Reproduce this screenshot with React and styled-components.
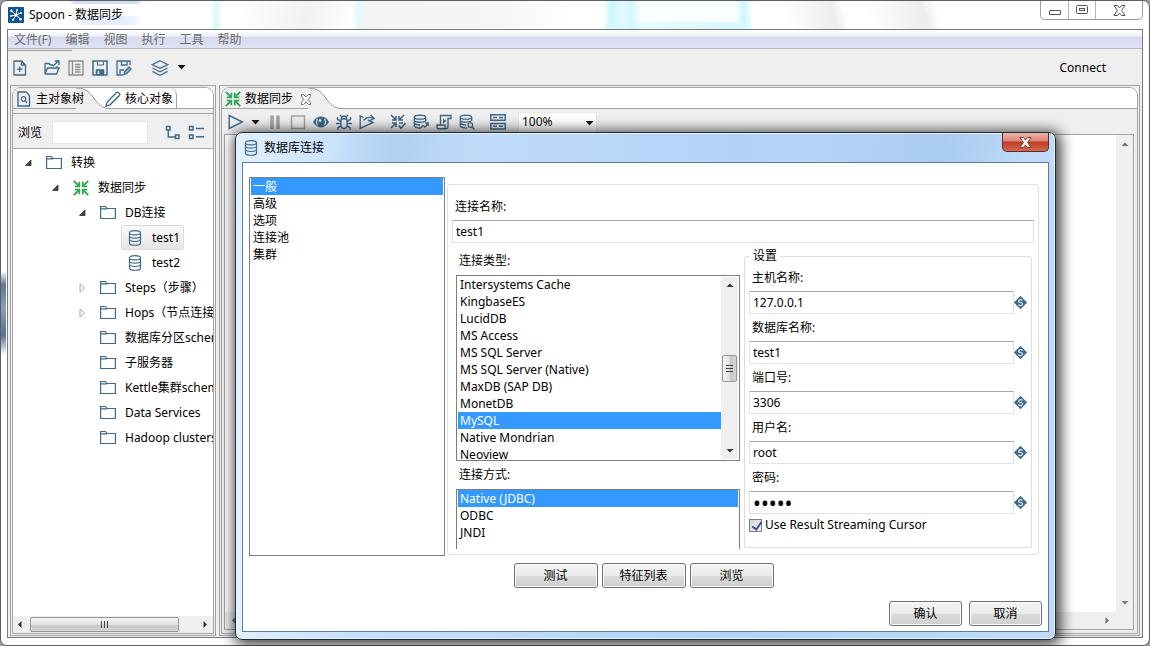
import React, { useState } from 'react'
import styled, { createGlobalStyle } from 'styled-components'

const BLUE = '#3f6a8b'
const GREEN = '#2fa655'

/* ---------- icons ---------- */

const Icon = ({ size = 16, color = BLUE, children }) => (
  <svg width={size} height={size} viewBox="0 0 16 16" fill="none" stroke={color} strokeWidth="1.5" aria-hidden="true">
    {children}
  </svg>
)

const LogoIcon = () => (
  <svg width="16" height="16" viewBox="0 0 16 16" aria-hidden="true">
    <rect width="16" height="16" rx="1" fill="#0f5592" />
    <path d="M8 8L3 3.5M8 8L9 3M8 8L13 6M8 8L3 9M8 8L5 13M8 8L12.5 12" stroke="#fff" strokeWidth="1" />
    <g fill="#fff">
      <circle cx="3.4" cy="3.8" r="1.2" /><circle cx="9" cy="3" r=".9" /><circle cx="13" cy="6" r="1" />
      <circle cx="2.8" cy="9" r=".9" /><circle cx="5" cy="13" r="1" /><circle cx="12.5" cy="12.3" r="1.3" />
      <circle cx="8" cy="8" r="1.6" />
    </g>
  </svg>
)

const NewIcon = () => <Icon><path d="M2 1H9.5L13.5 5V15H2ZM9.5 1V5H13.5M7.7 6.5V12M5 9.2H10.5" strokeWidth="1.3" /></Icon>
const OpenIcon = () => (
  <Icon><path d="M1 14V3.5H5L6.3 5H9M1 14L3.5 8H15L12.5 14H1M9 6L14.5 1M10.8 1H15V5M13 6V8" strokeWidth="1.3" /></Icon>
)
const ExploreIcon = () => (
  <Icon color="#8d8d8d"><path d="M1 1H15V15H1ZM4.5 1V15M7 4.5H12.5M7 7H12.5M7 9.5H12.5M7 12H12.5" strokeWidth="1.3" /></Icon>
)
const SaveIcon = () => (
  <Icon><path d="M1 1H15V15H1Z" /><path d="M4.5 14.5V10H11.5V14.5Z" fill={BLUE} /><path d="M5.5 1.5V5H11.5V1.5" strokeWidth="1" /><path d="M6.5 11V14" stroke="#fff" /></Icon>
)
const SaveAsIcon = () => (
  <Icon>
    <path d="M7 15H1V1H14V5M5.5 1.5V5H11V1.5M4 14V10H8" strokeWidth="1.3" />
    <path d="M8 14.5L8.7 11.5L13 7L15 9L10.8 13.5Z" fill="#9fb6c8" strokeWidth="1.3" />
  </Icon>
)
const LayersIcon = () => (
  <Icon size={18}><path d="M8 1.5L15 5L8 8.3L1 5ZM1.2 8L8 11.3L14.8 8M1.2 11L8 14.4L14.8 11" strokeWidth="1.1" /></Icon>
)
const CaretIcon = () => (
  <svg width="9" height="5" viewBox="0 0 9 5" aria-hidden="true"><path d="M.5 0H8.5L4.5 4.5Z" fill="#111" /></svg>
)
const FileSearchIcon = () => (
  <Icon><path d="M2 1H10L13.5 4.5V15H2Z" strokeWidth="1.4" /><circle cx="7.5" cy="8" r="2.3" strokeWidth="1.2" /><path d="M9 9.7L11 12" strokeWidth="1.2" /></Icon>
)
const PencilIcon = () => (
  <Icon><path d="M1 15L2.2 11L11.5 1.6Q12.5 .8 13.6 1.8L14.3 2.5Q15.2 3.5 14.4 4.5L5 13.8Z" strokeWidth="1.3" /></Icon>
)
const ExpandIcon = () => (
  <Icon><path d="M1.5 1.5H5V5H1.5ZM10.5 10H14V13.5H10.5ZM3.3 5.5V12H10" /></Icon>
)
const CollapseIcon = () => (
  <Icon><path d="M1.5 1.5H5V5H1.5ZM1.5 10H5V13.5H1.5ZM8 3.5H16M8 11.8H16" /></Icon>
)
const FolderIcon = () => <Icon><path d="M.6 13.5V1.5H5.5L7 3.5H15.4V13.5ZM.6 3.8H7" strokeWidth="1.2" /></Icon>
const TransIcon = () => (
  <Icon color={GREEN}>
    <path d="M.8 .8L6 6M15.2 .8L10 6M.8 15.2L6 10M15.2 15.2L10 10" strokeWidth="1.8" />
    <path d="M6.3 1.8V6.3H1.8M9.7 1.8V6.3H14.2M6.3 14.2V9.7H1.8M9.7 14.2V9.7H14.2" strokeWidth="1.8" />
  </Icon>
)
const DbIcon = () => (
  <Icon>
    <path d="M2.5 2.7V13C2.5 16 13.5 16 13.5 13V2.7M2.5 2.7C2.5 -.1 13.5 -.1 13.5 2.7S2.5 5.5 2.5 2.7M2.5 6.2C2.5 8.7 13.5 8.7 13.5 6.2M2.5 9.6C2.5 12.1 13.5 12.1 13.5 9.6" strokeWidth="1.2" />
  </Icon>
)
const PlayIcon = () => <Icon><path d="M1.2 1.5L14.5 8L1.2 14.5Z" /></Icon>
const PauseIcon = () => <Icon color="#a3a3a3"><path d="M5 1.5V15M11 1.5V15" strokeWidth="3.4" /></Icon>
const StopIcon = () => <Icon color="#a3a3a3"><path d="M1.5 2H14.5V14.5H1.5Z" /></Icon>
const EyeIcon = () => (
  <Icon>
    <path d="M0 8C4 .8 12 .8 16 8C12 15.2 4 15.2 0 8Z" fill={BLUE} stroke="none" />
    <path d="M4.3 4.8Q2.6 8 4.3 11.2M11.7 4.8Q13.4 8 11.7 11.2" stroke="#dbe6ee" strokeWidth="1.2" />
    <circle cx="7" cy="6.5" r="1.2" fill="#fff" stroke="none" />
  </Icon>
)
const BugIcon = () => (
  <Icon><path d="M5.3 5Q3.5 14.5 8 14.5T10.7 5ZM5.5 5Q5.5 2 8 2T10.5 5M4 1L5.8 3M12 1L10.2 3M4.5 7L1.5 5.5V3M11.5 7L14.5 5.5V3M4.2 9.5H0M11.8 9.5H16M5 12L2 13.5V16M11 12L14 13.5V16" strokeWidth="1.4" /></Icon>
)
const ReplayIcon = () => (
  <Icon><path d="M4.5 3.5L1.2 1.8V14.5L14 8.5L9 6" strokeWidth="1.4" /><path d="M4.5 6.5Q8 1.8 13.8 4M11.5 .8L15 4.5L11 6.5" strokeWidth="1.3" /></Icon>
)
const VerifyIcon = () => (
  <Icon><path d="M1 1L6 6M14 1L9 6M1 14L6 9M6 2V6H2M9 2V6H13M6 13V9H2M9 9H13M8.8 11.5L11 14.3L15.5 9" strokeWidth="1.6" /></Icon>
)
const DbImpactIcon = () => (
  <Icon><path d="M7 14C4 14 1.3 13 1.3 12V3.2C1.3 .6 12.7 .6 12.7 3.2S1.3 5.8 1.3 3.2M12.7 3V7M1.3 6.3C1.3 8.5 9 9 12.7 7M1.3 9.3Q3 11 7 11M7 14.5L10 11.5L12 13L15 9.5M12 9H15.2V12" strokeWidth="1.3" /></Icon>
)
const SqlIcon = () => (
  <Icon><path d="M4.5 11V1.5H15V4.5H12V13Q12 14.7 10.2 14.7H2.5Q1 14.7 1 13V11H9V13Q9 14.7 10.4 14.7" strokeWidth="1.4" /><path d="M7 4.5L10.5 7L7 9.5Z" fill={BLUE} stroke="none" /></Icon>
)
const DbExploreIcon = () => (
  <Icon><path d="M8 14C4 14 1.3 13 1.3 12V3.2C1.3 .6 12.7 .6 12.7 3.2S1.3 5.8 1.3 3.2M12.7 3V7M1.3 6.3C1.3 8.5 9 8.5 12 7M1.3 9.3Q3 11 7 11" strokeWidth="1.3" /><circle cx="11.3" cy="11" r="2.3" strokeWidth="1.2" /><path d="M13 12.8L15.5 15.5" /></Icon>
)
const ResultsIcon = () => (
  <Icon><path d="M.8 .8H15.2V6.3H.8ZM.8 9.5H15.2V15H.8ZM3 3.6H7M9 3.6H13M3 12.3H7M9 12.3H13" /></Icon>
)
const VariableIcon = () => (
  <svg width="13" height="13" viewBox="0 0 13 13" aria-hidden="true">
    <path d="M6.5 .7L12.2 6.5L6.5 12.3L.8 6.5Z" fill="#416b88" stroke="#416b88" strokeWidth="1.3" strokeLinejoin="round" />
    <path d="M8.6 4.4Q6.5 2.8 5 4.3T6.5 6.5T8 8.8T4.4 8.7" fill="none" stroke="#e3edf4" strokeWidth="1.1" />
  </svg>
)
const CloseTabIcon = () => (
  <svg width="12" height="11" viewBox="0 0 12 11" fill="#fff" stroke="#666" strokeWidth=".9" aria-hidden="true">
    <path d="M1.5 .5H3.5L6 3L8.5 .5H10.5V2.5L8.2 5.5L10.5 8.5V10.5H8.5L6 8L3.5 10.5H1.5V8.5L3.8 5.5L1.5 2.5Z" />
  </svg>
)
const CrossIcon = ({ stroke }) => (
  <svg width="13" height="11" viewBox="0 0 13 11" fill="#fff" stroke={stroke} aria-hidden="true">
    <path d="M1 .5H4.5L6.5 3L8.5 .5H12L8.6 5.5L12 10.5H8.5L6.5 8L4.5 10.5H1L4.4 5.5Z" />
  </svg>
)
const Twisty = ({ open }) => (
  <svg width="12" height="12" viewBox="0 0 12 12" aria-hidden="true">
    {open
      ? <path d="M9 3V8.5H3.5Z" fill="#444" stroke="#222" strokeWidth=".7" />
      : <path d="M4 2L8.5 6L4 10Z" fill="#fff" stroke="#a5a5a5" />}
  </svg>
)
const Arrow = ({ dir, color = '#333' }) => {
  const d = {
    up: 'M1.5 6L5 2.5L8.5 6Z', down: 'M1.5 3L5 6.5L8.5 3Z', left: 'M6.5 1L3 4.5L6.5 8Z', right: 'M3.5 1L7 4.5L3.5 8Z',
  }[dir]
  return <svg width="10" height="9" viewBox="0 0 10 9" aria-hidden="true"><path d={d} fill={color} /></svg>
}
const TabCurve = () => (
  <Curve width="34" height="21" viewBox="0 0 34 21" aria-hidden="true">
    <path d="M0 0C13 0 16 8 20 13C24 18 28 20.5 34 20.5V21H0Z" fill="#efefef" />
    <path d="M0 0C13 0 16 8 20 13C24 18 28 20.5 34 20.5" fill="none" stroke="#999" />
  </Curve>
)

/* ---------- data ---------- */

const menus = ['文件(F)', '编辑', '视图', '执行', '工具', '帮助']

const tree = [
  { level: 0, label: '转换', icon: 'folder', open: true },
  { level: 1, label: '数据同步', icon: 'trans', open: true },
  { level: 2, label: 'DB连接', icon: 'folder', open: true },
  { level: 3, label: 'test1', icon: 'db', selected: true },
  { level: 3, label: 'test2', icon: 'db' },
  { level: 2, label: 'Steps（步骤）', icon: 'folder', open: false },
  { level: 2, label: 'Hops（节点连接）', icon: 'folder', open: false },
  { level: 2, label: '数据库分区schemas', icon: 'folder' },
  { level: 2, label: '子服务器', icon: 'folder' },
  { level: 2, label: 'Kettle集群schemas', icon: 'folder' },
  { level: 2, label: 'Data Services', icon: 'folder' },
  { level: 2, label: 'Hadoop clusters', icon: 'folder' },
]

const treeIcons = { folder: <FolderIcon />, trans: <TransIcon />, db: <DbIcon /> }

const categories = ['一般', '高级', '选项', '连接池', '集群']

const dbTypes = [
  'Intersystems Cache', 'KingbaseES', 'LucidDB', 'MS Access', 'MS SQL Server', 'MS SQL Server (Native)',
  'MaxDB (SAP DB)', 'MonetDB', 'MySQL', 'Native Mondrian', 'Neoview',
]

const accessTypes = ['Native (JDBC)', 'ODBC', 'JNDI']

const fields = [
  { id: 'host', label: '主机名称:', value: '127.0.0.1' },
  { id: 'dbname', label: '数据库名称:', value: 'test1' },
  { id: 'port', label: '端口号:', value: '3306' },
  { id: 'user', label: '用户名:', value: 'root' },
  { id: 'pass', label: '密码:', value: '12345', type: 'password' },
]

const ListBox = ({ label, items, value, onChange }) => (
  <Options role="listbox" aria-label={label}>
    {items.map((item) => (
      <Option key={item} role="option" aria-selected={item === value} $active={item === value} onClick={() => onChange(item)}>
        {item}
      </Option>
    ))}
  </Options>
)

const DatabaseDialog = () => {
  const [category, setCategory] = useState('一般')
  const [dbType, setDbType] = useState('MySQL')
  const [access, setAccess] = useState('Native (JDBC)')

  return (
    <Dialog role="dialog" aria-label="数据库连接">
      <DialogTitle>
        <DbIcon />
        <span>数据库连接</span>
        <DialogClose type="button" aria-label="关闭"><CrossIcon stroke="#7b3a38" /></DialogClose>
      </DialogTitle>
      <DialogBody>
        <DialogMain>
          <Categories>
            <ListBox label="数据库连接" items={categories} value={category} onChange={setCategory} />
          </Categories>
          <General>
            <Label htmlFor="name">连接名称:</Label>
            <TextInput id="name" defaultValue="test1" />
            <Columns>
              <Types>
                <Caption>连接类型:</Caption>
                <TypeList>
                  <ListBox label="连接类型:" items={dbTypes} value={dbType} onChange={setDbType} />
                  <VScroll>
                    <Arrow dir="up" />
                    <VThumb><i /><i /><i /></VThumb>
                    <Arrow dir="down" />
                  </VScroll>
                </TypeList>
                <Caption>连接方式:</Caption>
                <AccessList>
                  <ListBox label="连接方式:" items={accessTypes} value={access} onChange={setAccess} />
                </AccessList>
              </Types>
              <Settings>
                <legend>设置</legend>
                {fields.map((f) => (
                  <Field key={f.id}>
                    <Label htmlFor={f.id}>{f.label}</Label>
                    <FieldRow>
                      <TextInput id={f.id} type={f.type || 'text'} defaultValue={f.value} />
                      <VariableIcon />
                    </FieldRow>
                  </Field>
                ))}
                <CheckRow>
                  <input type="checkbox" defaultChecked />
                  Use Result Streaming Cursor
                </CheckRow>
              </Settings>
            </Columns>
          </General>
        </DialogMain>
        <Actions>
          <Button type="button" $wide>测试</Button>
          <Button type="button" $wide>特征列表</Button>
          <Button type="button" $wide>浏览</Button>
        </Actions>
        <Footer>
          <Button type="button">确认</Button>
          <Button type="button">取消</Button>
        </Footer>
      </DialogBody>
    </Dialog>
  )
}

const Explorer = () => (
  <SidePanel>
    <PanelInner>
      <TabStrip>
        <Tab type="button"><FileSearchIcon /><span>主对象树</span></Tab>
        <TabCurve />
        <OtherTab type="button"><PencilIcon /><span>核心对象</span></OtherTab>
      </TabStrip>
      <SearchRow>
        <label htmlFor="search">浏览</label>
        <input id="search" />
        <IconButton type="button" aria-label="展开"><ExpandIcon /></IconButton>
        <IconButton type="button" aria-label="折叠"><CollapseIcon /></IconButton>
      </SearchRow>
      <Tree role="tree">
        {tree.map((node) => (
          <TreeRow key={node.label} role="treeitem" aria-level={node.level + 1} $level={node.level}>
            <TwistySlot>{node.open !== undefined && <Twisty open={node.open} />}</TwistySlot>
            <TreeNode $selected={node.selected}>
              {treeIcons[node.icon]}
              <span>{node.label}</span>
            </TreeNode>
          </TreeRow>
        ))}
      </Tree>
      <HScroll>
        <Arrow dir="left" />
        <HThumb><i /><i /><i /></HThumb>
        <Arrow dir="right" />
      </HScroll>
    </PanelInner>
  </SidePanel>
)

const Editor = () => (
  <EditorPanel>
    <PanelInner>
      <TabStrip>
        <Tab type="button" $closable><TransIcon /><span>数据同步</span><CloseTabIcon /></Tab>
        <TabCurve />
      </TabStrip>
      <EditorToolbar>
        <IconButton type="button" aria-label="运行"><PlayIcon /></IconButton>
        <IconButton type="button" aria-label="运行选项"><CaretIcon /></IconButton>
        <IconButton type="button" aria-label="暂停"><PauseIcon /></IconButton>
        <IconButton type="button" aria-label="停止"><StopIcon /></IconButton>
        <IconButton type="button" aria-label="预览"><EyeIcon /></IconButton>
        <IconButton type="button" aria-label="调试"><BugIcon /></IconButton>
        <IconButton type="button" aria-label="重放"><ReplayIcon /></IconButton>
        <IconButton type="button" aria-label="校验" $space={8}><VerifyIcon /></IconButton>
        <IconButton type="button" aria-label="影响"><DbImpactIcon /></IconButton>
        <IconButton type="button" aria-label="SQL"><SqlIcon /></IconButton>
        <IconButton type="button" aria-label="浏览数据库"><DbExploreIcon /></IconButton>
        <IconButton type="button" aria-label="结果" $space={8}><ResultsIcon /></IconButton>
        <Zoom>
          <select aria-label="缩放" defaultValue="100%"><option>100%</option></select>
          <CaretIcon />
        </Zoom>
      </EditorToolbar>
      <CanvasFrame>
        <CanvasRow>
          <Canvas />
          <CanvasVScroll><Arrow dir="up" color="#777" /><Arrow dir="down" color="#777" /></CanvasVScroll>
        </CanvasRow>
        <CanvasHScroll><Arrow dir="left" color="#777" /><Arrow dir="right" color="#777" /></CanvasHScroll>
      </CanvasFrame>
    </PanelInner>
  </EditorPanel>
)

const App = () => {
  return (
    <>
      <GlobalStyle />
      <Frame>
        <TitleBar>
          <LogoIcon />
          <span>Spoon - 数据同步</span>
          <WindowButtons>
            <button type="button" aria-label="最小化">
              <svg width="12" height="12" viewBox="0 0 12 12"><rect x=".5" y="6.5" width="11" height="4" rx=".5" fill="#fff" stroke="#555" /></svg>
            </button>
            <button type="button" aria-label="最大化">
              <svg width="12" height="10" viewBox="0 0 12 10" fill="#fff" stroke="#555"><rect x=".5" y=".5" width="11" height="8" rx="1" /><rect x="3.5" y="3.5" width="5" height="2" /></svg>
            </button>
            <button type="button" aria-label="关闭"><CrossIcon stroke="#555" /></button>
          </WindowButtons>
        </TitleBar>
        <Content>
          <MenuBar>
            {menus.map((m) => <button type="button" key={m}>{m}</button>)}
          </MenuBar>
          <MainToolbar>
            <IconButton type="button" aria-label="新建"><NewIcon /></IconButton>
            <IconButton type="button" aria-label="打开" $space={8}><OpenIcon /></IconButton>
            <IconButton type="button" aria-label="资源库"><ExploreIcon /></IconButton>
            <IconButton type="button" aria-label="保存"><SaveIcon /></IconButton>
            <IconButton type="button" aria-label="另存为"><SaveAsIcon /></IconButton>
            <IconButton type="button" aria-label="视图" $space={11}><LayersIcon /></IconButton>
            <IconButton type="button" aria-label="视图选项"><CaretIcon /></IconButton>
            <Connect type="button">Connect</Connect>
          </MainToolbar>
          <Workspace>
            <Explorer />
            <Editor />
          </Workspace>
        </Content>
      </Frame>
      <DatabaseDialog />
    </>
  )
}

export default App

/* ---------- styles ---------- */

const GlobalStyle = createGlobalStyle`
    *{
        box-sizing: border-box;
    }
    body{
        margin: 0;
        background: #9a9a9a;
        color: #000;
    }
    body, button, input, select{
        font-family: "Noto Sans", "Noto Sans CJK SC", sans-serif;
        font-size: 12px;
        line-height: 16px;
    }
    button{
        padding: 0;
        border: none;
        background: none;
        color: inherit;
    }
    ul{
        margin: 0;
        padding: 0;
        list-style: none;
    }
    svg{
        display: block;
        flex-shrink: 0;
    }
`

const Frame = styled.div`
    height: 100vh;
    min-height: 640px;
    display: flex;
    flex-direction: column;
    padding: 0 6px 7px;
    border: 1px solid #5c5f61;
    border-radius: 7px;
    background:
        linear-gradient(#fff0 0, #5d7898 14px, #8aa0b8 36px, #56708f 64px, #fff0 84px) 0 270px / 5px 84px no-repeat,
        linear-gradient(90deg, #fff0 70px, #e4ecff 90px, #e4ecff 125px, #fff0 142px) 0 15px / 100% 9px no-repeat,
        linear-gradient(90deg, #fff0 68px, #d5dcf5 74px, #d5dcf5 135px, #fff0 142px) 0 0 / 100% 3px no-repeat,
        linear-gradient(90deg, #fff0 209px, #d9f8f6 215px, #fff0 222px) 0 0 / 100% 28px no-repeat,
        linear-gradient(105deg, #fff0 230px, #f1f1f1 300px, #fff0 345px) 0 0 / 100% 28px no-repeat,
        linear-gradient(90deg, #fff0 351px, #e2f8f8 357px, #f3f3f3 364px, #f6f6f6 500px, #fff0 570px) 0 0 / 100% 28px no-repeat,
        linear-gradient(90deg, #fff0 602px, #d8f8ff80 606px, #d8f8ff 745px, #fff0 752px) 0 21px / 100% 7px no-repeat,
        linear-gradient(90deg, #fff0 602px, #cdf6ff 610px, #e2faff 622px, #d3f7ff 630px, #fafeff 640px, #fafeff 734px, #cdf6ff 743px, #fff0 752px) 0 0 / 100% 28px no-repeat,
        linear-gradient(75deg, #fff0 760px, #ededed 808px, #fff0 820px, #fff0 840px, #ededed 895px, #fff0 910px) 0 0 / 100% 28px no-repeat,
        #fff;
`

const TitleBar = styled.div`
    height: 28px;
    flex-shrink: 0;
    display: flex;
    align-items: center;
    gap: 5px;
    padding-left: 1px;
`

const WindowButtons = styled.div`
    align-self: flex-start;
    display: flex;
    height: 19px;
    margin-left: auto;
    border: 1px solid #9a9a9a;
    border-top: none;
    border-radius: 0 0 5px 5px;
    button{
        width: 27px;
        display: flex;
        align-items: center;
        justify-content: center;
    }
    button + button{
        border-left: 1px solid #b5b5b5;
    }
    button:last-child{
        width: 47px;
    }
`

const Content = styled.div`
    flex: 1;
    min-height: 0;
    display: flex;
    flex-direction: column;
    border: 1px solid #77797a;
    background: #efefef;
`

const MenuBar = styled.div`
    height: 19px;
    flex-shrink: 0;
    display: flex;
    align-items: center;
    gap: 14px;
    padding: 2px 0 0 6px;
    border-bottom: 1px solid #b4b6bd;
    background: linear-gradient(#fff, #f0f2f8 6px, #d6daef 7px, #e0e2f4);
    color: #6d6d6d;
`

const MainToolbar = styled.div`
    height: 36px;
    flex-shrink: 0;
    display: flex;
    align-items: center;
    gap: 8px;
    padding: 1px 36px 0 4px;
    background: linear-gradient(#9a9a9a, #9a9a9a) 0 1px / 64px 1px no-repeat;
`

const IconButton = styled.button`
    flex-shrink: 0;
    margin-left: ${(p) => p.$space || 0}px;
`

const Connect = styled.button`
    margin-left: auto;
`

const Workspace = styled.div`
    flex: 1;
    min-height: 0;
    display: flex;
    gap: 3px;
    padding: 0 2px 1px;
`

const Panel = styled.div`
    display: flex;
    min-width: 0;
    padding: 1px;
    border: 1px solid #a3a3a3;
`

const SidePanel = styled(Panel)`
    width: 206px;
    flex-shrink: 0;
`

const EditorPanel = styled(Panel)`
    flex: 1;
`

const PanelInner = styled.div`
    flex: 1;
    min-width: 0;
    display: flex;
    flex-direction: column;
    border: 1px solid #a3a3a3;
    border-radius: 9px 9px 0 0;
    overflow: hidden;
`

const TabStrip = styled.div`
    height: 21px;
    flex-shrink: 0;
    display: flex;
    border-bottom: 1px solid #a3a3a3;
    background: #fff;
`

const Tab = styled.button`
    position: relative;
    z-index: 1;
    display: flex;
    align-items: center;
    gap: ${(p) => (p.$closable ? 7 : 4)}px;
    padding: ${(p) => (p.$closable ? '2px 4px 0 3px' : '2px 0 0 3px')};
    background: linear-gradient(#efefef, #efefef) 0 0 / calc(100% - 8px) 100% no-repeat;
    svg + span{
        margin-left: ${(p) => (p.$closable ? -3 : 0)}px;
    }
`

const Curve = styled.svg`
    margin-left: -8px;
`

const OtherTab = styled.button`
    position: relative;
    z-index: 1;
    display: flex;
    align-items: center;
    gap: 4px;
    margin-left: -5px;
    padding: 2px 3px 0 0;
    border-right: 1px solid #a3a3a3;
    border-radius: 0 7px 0 0;
`

const SearchRow = styled.div`
    flex-shrink: 0;
    height: 40px;
    display: flex;
    align-items: center;
    gap: 7px;
    padding: 8px 9px 0 5px;
    border-bottom: 1px solid #a3a3a3;
    background: linear-gradient(#a3a3a3, #a3a3a3) 0 4px / 100% 1px no-repeat;
    input{
        width: 96px;
        height: 23px;
        margin: 0 auto 0 3px;
        border: 1px solid #e6e6e6;
        background: #fff;
    }
`

const Tree = styled.ul`
    flex: 1;
    min-height: 0;
    padding-top: 1px;
    overflow: hidden;
    background: #fff;
`

const TreeRow = styled.li`
    height: 25px;
    display: flex;
    align-items: center;
    gap: 6px;
    padding-left: ${(p) => 9 + p.$level * 27}px;
    white-space: nowrap;
`

const TwistySlot = styled.span`
    width: 12px;
    flex-shrink: 0;
`

const TreeNode = styled.span`
    height: 25px;
    display: flex;
    align-items: center;
    gap: 9px;
    padding: 0 3px 0 5px;
    border: 1px solid ${(p) => (p.$selected ? '#dcdcdc' : 'transparent')};
    border-radius: 2px;
    background: ${(p) => (p.$selected ? 'linear-gradient(#f9f9f9, #e6e6e6)' : 'none')};
`

const HScroll = styled.div`
    height: 17px;
    flex-shrink: 0;
    display: flex;
    align-items: center;
    gap: 5px;
    padding: 0 3px 0 2px;
    background: #efefef;
    > svg:last-child{
        margin-left: auto;
    }
`

const HThumb = styled.div`
    width: 149px;
    height: 15px;
    display: flex;
    align-items: center;
    justify-content: center;
    gap: 2px;
    border: 1px solid #979797;
    border-radius: 2px;
    background: linear-gradient(#f4f4f4, #e2e2e2 50%, #c6c6c6 51%, #d4d4d4);
    i{
        width: 1px;
        height: 7px;
        background: #444;
    }
`

const EditorToolbar = styled.div`
    height: 25px;
    flex-shrink: 0;
    display: flex;
    align-items: center;
    gap: 7px;
    padding: 1px 0 0 6px;
`

const Zoom = styled.div`
    position: relative;
    margin-left: 5px;
    select{
        width: 79px;
        height: 21px;
        display: block;
        padding: 0 3px;
        border: 1px solid #e8e8e8;
        background: #fff;
        appearance: none;
    }
    svg{
        position: absolute;
        top: 9px;
        right: 3px;
        pointer-events: none;
    }
`

const CanvasFrame = styled.div`
    flex: 1;
    min-height: 0;
    display: flex;
    flex-direction: column;
    margin: 0 3px 3px 2px;
    border: 1px solid #a3a3a3;
`

const CanvasRow = styled.div`
    flex: 1;
    min-height: 0;
    display: flex;
`

const Canvas = styled.div`
    flex: 1;
    background: #fff;
`

const CanvasVScroll = styled.div`
    width: 17px;
    display: flex;
    flex-direction: column;
    justify-content: space-between;
    align-items: center;
    padding: 5px 0;
    background: #efefef;
`

const CanvasHScroll = styled.div`
    height: 17px;
    display: flex;
    justify-content: space-between;
    align-items: center;
    padding: 0 21px 0 4px;
    background: #efefef;
`

const Dialog = styled.div`
    position: absolute;
    top: 132px;
    left: 235px;
    right: 94px;
    z-index: 10;
    padding: 0 6px 7px;
    border: 1px solid #1f2d3b;
    border-radius: 7px;
    background:
        linear-gradient(100deg, #fff0 100px, #9cc3ea80 160px, #fff0 240px, #fff0 560px, #9cc3ea99 700px, #fff0 780px) 0 0 / 100% 29px no-repeat,
        linear-gradient(90deg, #e2f0ff, #c6dffa 120px, #b3d3f6 500px, #c0dbf8);
    box-shadow: inset 0 0 0 1px #e5f2ff, 2px 2px 14px 3px rgba(0, 0, 0, 0.75);
`

const DialogTitle = styled.div`
    height: 29px;
    display: flex;
    align-items: center;
    gap: 5px;
    padding-left: 1px;
`

const DialogClose = styled.button`
    align-self: flex-start;
    width: 47px;
    height: 19px;
    display: flex;
    align-items: center;
    justify-content: center;
    margin-left: auto;
    border: 1px solid #5b2a2a;
    border-top: none;
    border-radius: 0 0 5px 5px;
    background: linear-gradient(#eeb3a6, #dc8474 45%, #bf3a25 50%, #d2694f);
`

const DialogBody = styled.div`
    padding: 14px 6px 5px;
    border: 1px solid #5f7d9c;
    background: #fff;
`

const DialogMain = styled.div`
    display: flex;
    gap: 2px;
`

const Categories = styled.div`
    width: 196px;
    flex-shrink: 0;
    padding: 0 1px;
    border: 1px solid #7b7f83;
`

const General = styled.div`
    flex: 1;
    min-width: 0;
    display: flex;
    flex-direction: column;
    gap: 5px;
    margin: 7px 3px 1px 0;
    padding: 14px 4px 5px;
    border: 1px solid #e0e0e0;
    border-radius: 3px;
`

const Label = styled.label`
    display: block;
    padding-left: 3px;
`

const Caption = styled.div`
    padding-left: 3px;
`

const TextInput = styled.input`
    width: 100%;
    height: 23px;
    padding: 0 3px;
    border: 1px solid #dfe3e8;
    border-top-color: #a5a8ad;
    border-radius: 1px;
    background: #fff;
    outline: none;
    &[type='password']{
        font-size: 21px;
    }
`

const Columns = styled.div`
    display: flex;
    align-items: flex-start;
    gap: 4px;
    padding: 0 2px 0 4px;
`

const Types = styled.div`
    flex: 1;
    min-width: 0;
    display: flex;
    flex-direction: column;
    gap: 6px;
    padding-top: 5px;
`

const Options = styled.ul`
    flex: 1;
    min-width: 0;
`

const Option = styled.li`
    height: 17px;
    padding: 0 2px;
    line-height: 17px;
    white-space: nowrap;
    cursor: default;
    color: ${(p) => (p.$active ? '#fff' : '#000')};
    background: ${(p) => (p.$active ? '#3399ff' : 'transparent')};
`

const TypeList = styled.div`
    height: 186px;
    display: flex;
    padding: 0 1px;
    border: 1px solid #7b7f83;
    overflow: hidden;
`

const AccessList = styled.div`
    height: 60px;
    padding: 0 1px;
    border: 1px solid #7b7f83;
    border-bottom: none;
`

const VScroll = styled.div`
    width: 17px;
    height: 182px;
    flex-shrink: 0;
    display: flex;
    flex-direction: column;
    align-items: center;
    justify-content: space-between;
    margin: 1px 0;
    padding: 4px 0;
    background: #efefef;
`

const VThumb = styled.div`
    width: 15px;
    height: 27px;
    display: flex;
    flex-direction: column;
    align-items: center;
    justify-content: center;
    gap: 2px;
    border: 1px solid #979797;
    border-radius: 2px;
    background: linear-gradient(90deg, #f4f4f4, #e2e2e2 50%, #c6c6c6 51%, #d4d4d4);
    i{
        width: 7px;
        height: 1px;
        background: #444;
    }
`

const Settings = styled.fieldset`
    width: 288px;
    min-width: 0;
    margin: 0;
    padding: 6px 4px 14px;
    border: 1px solid #dcdcdc;
    border-radius: 3px;
    legend{
        padding: 0 3px 0 4px;
    }
`

const Field = styled.div`
    margin-bottom: 6px;
    &:last-of-type{
        margin-bottom: 3px;
    }
`

const FieldRow = styled.div`
    display: flex;
    align-items: center;
    margin-top: 5px;
`

const CheckRow = styled.label`
    display: flex;
    align-items: center;
    gap: 3px;
    input{
        position: relative;
        width: 13px;
        height: 13px;
        margin: 0;
        border: 1px solid #7a7f85;
        background: linear-gradient(135deg, #ccd3da, #f6f6f6);
        appearance: none;
    }
    input:checked::after{
        content: '';
        position: absolute;
        left: 4px;
        top: 0;
        width: 4px;
        height: 8px;
        border: solid #3b567f;
        border-width: 0 2px 2px 0;
        transform: rotate(35deg);
    }
`

const Actions = styled.div`
    display: flex;
    justify-content: center;
    gap: 4px;
    margin-top: 7px;
    padding-right: 4px;
`

const Footer = styled.div`
    display: flex;
    justify-content: flex-end;
    gap: 7px;
    margin-top: 13px;
`

const Button = styled.button`
    width: ${(p) => (p.$wide ? 84 : 73)}px;
    height: 25px;
    border: 1px solid #707070;
    border-radius: 3px;
    background: linear-gradient(#f3f3f3, #ebebeb 50%, #dcdcdc 51%, #cfcfcf);
    box-shadow: inset 0 0 0 1px #fbfbfb;
`
